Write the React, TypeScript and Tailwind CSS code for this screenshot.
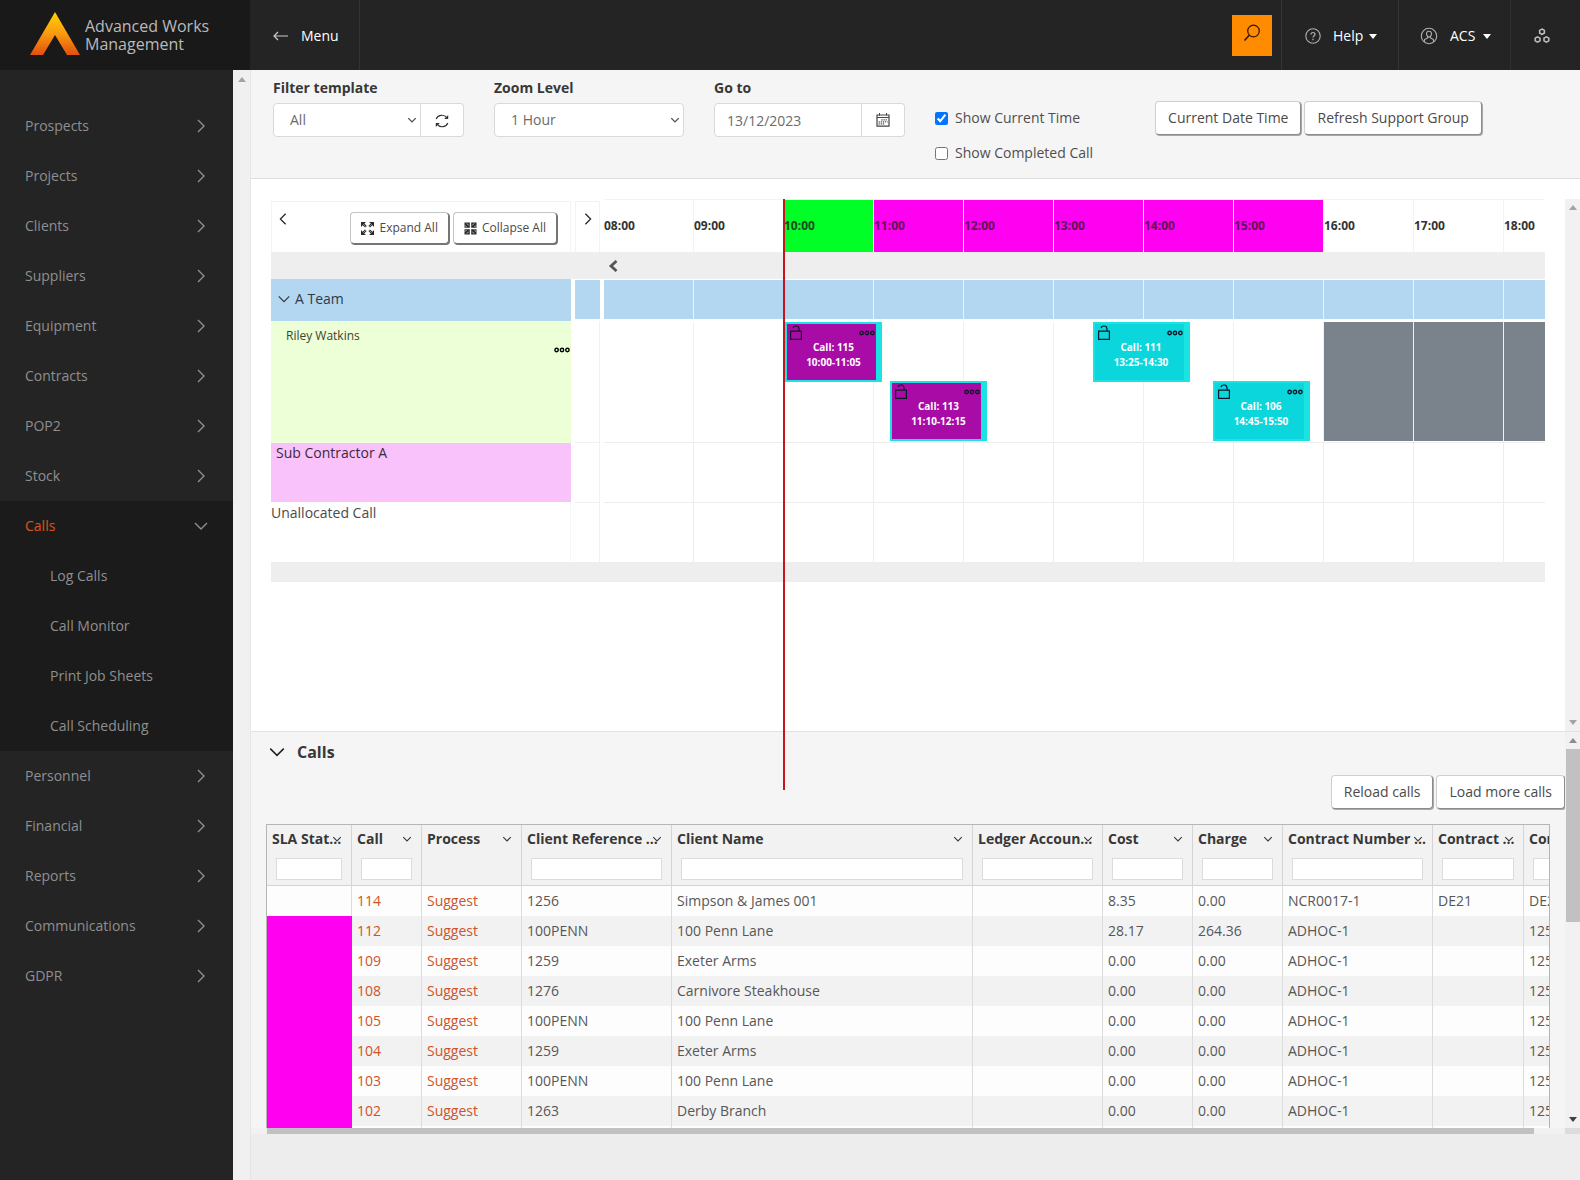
import React from 'react';

type NavItem = { label: string; children?: string[] };

const NAV: NavItem[] = [
  { label: 'Prospects' },
  { label: 'Projects' },
  { label: 'Clients' },
  { label: 'Suppliers' },
  { label: 'Equipment' },
  { label: 'Contracts' },
  { label: 'POP2' },
  { label: 'Stock' },
  { label: 'Calls', children: ['Log Calls', 'Call Monitor', 'Print Job Sheets', 'Call Scheduling'] },
  { label: 'Personnel' },
  { label: 'Financial' },
  { label: 'Reports' },
  { label: 'Communications' },
  { label: 'GDPR' },
];

const HOURS = [8, 9, 10, 11, 12, 13, 14, 15, 16, 17, 18];
const HOUR_WIDTH = 90;

type Booking = { id: number; start: string; end: string; lane: 0 | 1; allocated: boolean };

const BOOKINGS: Booking[] = [
  { id: 115, start: '10:00', end: '11:05', lane: 0, allocated: true },
  { id: 113, start: '11:10', end: '12:15', lane: 1, allocated: true },
  { id: 111, start: '13:25', end: '14:30', lane: 0, allocated: false },
  { id: 106, start: '14:45', end: '15:50', lane: 1, allocated: false },
];

const COLUMNS = [
  { title: 'SLA Stat...', width: 'w-[85px]', filter: true },
  { title: 'Call', width: 'w-[70px]', filter: true },
  { title: 'Process', width: 'w-[100px]', filter: false },
  { title: 'Client Reference ...', width: 'w-[150px]', filter: true },
  { title: 'Client Name', width: 'w-[301px]', filter: true },
  { title: 'Ledger Accoun...', width: 'w-[130px]', filter: true },
  { title: 'Cost', width: 'w-[90px]', filter: true },
  { title: 'Charge', width: 'w-[90px]', filter: true },
  { title: 'Contract Number ...', width: 'w-[150px]', filter: true },
  { title: 'Contract ...', width: 'w-[91px]', filter: true },
  { title: 'Contract', width: 'w-[150px]', filter: true },
];

const CALLS = [
  { call: '114', ref: '1256', client: 'Simpson & James 001', cost: '8.35', charge: '0.00', contract: 'NCR0017-1', code: 'DE21', name: 'DE21', late: false },
  { call: '112', ref: '100PENN', client: '100 Penn Lane', cost: '28.17', charge: '264.36', contract: 'ADHOC-1', code: '', name: '1256', late: true },
  { call: '109', ref: '1259', client: 'Exeter Arms', cost: '0.00', charge: '0.00', contract: 'ADHOC-1', code: '', name: '1256', late: true },
  { call: '108', ref: '1276', client: 'Carnivore Steakhouse', cost: '0.00', charge: '0.00', contract: 'ADHOC-1', code: '', name: '1256', late: true },
  { call: '105', ref: '100PENN', client: '100 Penn Lane', cost: '0.00', charge: '0.00', contract: 'ADHOC-1', code: '', name: '1256', late: true },
  { call: '104', ref: '1259', client: 'Exeter Arms', cost: '0.00', charge: '0.00', contract: 'ADHOC-1', code: '', name: '1256', late: true },
  { call: '103', ref: '100PENN', client: '100 Penn Lane', cost: '0.00', charge: '0.00', contract: 'ADHOC-1', code: '', name: '1256', late: true },
  { call: '102', ref: '1263', client: 'Derby Branch', cost: '0.00', charge: '0.00', contract: 'ADHOC-1', code: '', name: '1256', late: true },
];

const minutesFromStart = (time: string) => {
  const [h, m] = time.split(':').map(Number);
  return (h - HOURS[0]) * 60 + m;
};

/* ---------- icons ---------- */

const CHEVRONS = {
  left: 'M11 2 L5 8 L11 14',
  right: 'M5 2 L11 8 L5 14',
  down: 'M2 5 L8 11 L14 5',
};

const Chevron = ({ dir, className, weight = 1.4 }: { dir: keyof typeof CHEVRONS; className?: string; weight?: number }) => (
  <svg viewBox="0 0 16 16" className={className} fill="none" stroke="currentColor" strokeWidth={weight} aria-hidden="true">
    <path d={CHEVRONS[dir]} />
  </svg>
);

const ScrollArrow = ({ up, className = '' }: { up?: boolean; className?: string }) => (
  <svg viewBox="0 0 8 5" className={`h-[5px] w-2 ${className}`} fill="currentColor" aria-hidden="true">
    <path d={up ? 'M4 0 L8 5 H0 Z' : 'M0 0 H8 L4 5 Z'} />
  </svg>
);

const Logo = () => (
  <svg viewBox="0 0 50 43" className="mb-1 h-[43px] w-[50px]" aria-hidden="true">
    <defs>
      <linearGradient id="logo" x1="0" y1="0" x2="0" y2="1">
        <stop offset="0" stopColor="#ffd200" />
        <stop offset="0.5" stopColor="#fb9a10" />
        <stop offset="1" stopColor="#e2500f" />
      </linearGradient>
    </defs>
    <path d="M25 0 L50 43 H37 L25 23 L13 43 H0 Z" fill="url(#logo)" />
  </svg>
);

const ArrowLeft = () => (
  <svg viewBox="0 0 16 10" className="h-[10px] w-4 text-[#c9c9c9]" fill="none" stroke="currentColor" strokeWidth="1.2" aria-hidden="true">
    <path d="M1 5 H15 M5 1 L1 5 L5 9" />
  </svg>
);

const SearchIcon = () => (
  <svg viewBox="0 0 18 18" className="h-[18px] w-[18px]" fill="none" stroke="currentColor" strokeWidth="1.3" aria-hidden="true">
    <circle cx="10.5" cy="7" r="5.8" />
    <path d="M6.2 11.2 L1.5 16.5" strokeWidth="1.7" />
  </svg>
);

const HelpIcon = () => (
  <svg viewBox="0 0 16 16" className="h-4 w-4 text-[#b0b0b0]" fill="none" stroke="currentColor" aria-hidden="true">
    <circle cx="8" cy="8" r="7.2" strokeWidth="1.1" />
    <path d="M6 6.4 C6 3.9 10 3.9 10 6.3 C10 7.7 8 7.8 8 9.6" strokeWidth="1.2" />
    <path d="M8 10.8 V12.2" strokeWidth="1.3" />
  </svg>
);

const UserIcon = () => (
  <svg viewBox="0 0 18 18" className="h-[18px] w-[18px] text-[#b0b0b0]" fill="none" stroke="currentColor" strokeWidth="1.1" aria-hidden="true">
    <circle cx="9" cy="9" r="7.7" />
    <path d="M9 4.2 C6.8 4.2 6.3 5.8 6.6 7.4 C6.8 8.8 7.6 10 9 10 C10.4 10 11.2 8.8 11.4 7.4 C11.7 5.8 11.2 4.2 9 4.2 Z" />
    <path d="M7.6 9.8 V11 L4.5 12.6 V15 M10.4 9.8 V11 L13.5 12.6 V15" />
  </svg>
);

const ClusterIcon = () => (
  <svg viewBox="0 0 16 16" className="h-4 w-4 text-[#c0c0c0]" fill="none" stroke="currentColor" strokeWidth="1.5" aria-hidden="true">
    <path d="M8 1 L10.4 2.4 V5 L8 6.4 L5.6 5 V2.4 Z" />
    <path d="M3.6 8.8 L6 10.2 V12.8 L3.6 14.2 L1.2 12.8 V10.2 Z" />
    <path d="M12.4 8.8 L14.8 10.2 V12.8 L12.4 14.2 L10 12.8 V10.2 Z" />
  </svg>
);

const RefreshIcon = () => (
  <svg viewBox="0 0 14 14" className="mt-[2px] h-[14px] w-[14px] text-[#333]" fill="none" stroke="currentColor" strokeWidth="1.2" aria-hidden="true">
    <path d="M1.2 5 C2.6 1 8.6 -0.4 12 3.8" />
    <path d="M12.8 9 C11.4 13 5.4 14.4 2 10.2" />
    <path d="M13.2 1 V5 H9.2 Z M0.8 13 V9 H4.8 Z" fill="currentColor" stroke="none" />
  </svg>
);

const CalendarIcon = () => (
  <svg viewBox="0 0 14 14" className="h-[14px] w-[14px] text-[#444]" fill="none" stroke="currentColor" aria-hidden="true">
    <path d="M1 2 H13 V13.2 H1 Z M1 4.5 H13" strokeWidth="1.2" />
    <path d="M3.5 0 V2.6 M10.5 0 V2.6" />
    <path d="M5.4 6.8 H11.6 M2.6 8.8 H11.6 M2.6 10.8 H9" strokeWidth="1.2" strokeDasharray="1.2 0.9" />
  </svg>
);

const ExpandIcon = () => (
  <svg viewBox="0 0 13 13" className="h-[13px] w-[13px] text-[#2b2b2b]" fill="currentColor" aria-hidden="true">
    <path d="M0 0 H5 L3.4 1.6 L5.8 4 L4.2 5.6 L1.6 3.2 L0 5 Z" />
    <path d="M13 0 V5 L11.4 3.2 L9 5.6 L7.4 4 L9.8 1.6 L8 0 Z" />
    <path d="M0 13 V8 L1.6 9.8 L4 7.4 L5.6 9 L3.2 11.4 L5 13 Z" />
    <path d="M13 13 H8 L9.8 11.4 L7.4 9 L9 7.4 L11.4 9.8 L13 8 Z" />
    <path d="M2.2 2.2 L4.6 4.6 M10.8 2.2 L8.4 4.6 M2.2 10.8 L4.6 8.4 M10.8 10.8 L8.4 8.4" stroke="#fff" strokeWidth="0.5" />
  </svg>
);

const CollapseIcon = () => (
  <svg viewBox="0 0 13 13" className="h-[13px] w-[13px] text-[#2b2b2b]" aria-hidden="true">
    <path d="M0.5 0.5 H5.8 V5.8 H0.5 Z M7.2 0.5 H12.5 V5.8 H7.2 Z M0.5 7.2 H5.8 V12.5 H0.5 Z M7.2 7.2 H12.5 V12.5 H7.2 Z" fill="currentColor" />
    <path d="M1 3.4 L2.6 5 M2.8 1.4 L4.8 3.4 M12 3.4 L10.4 5 M10.2 1.4 L8.2 3.4 M1 9.6 L2.6 8 M2.8 11.6 L4.8 9.6 M12 9.6 L10.4 8 M10.2 11.6 L8.2 9.6" stroke="#fff" strokeWidth="0.7" />
  </svg>
);

const LockIcon = () => (
  <svg viewBox="0 0 12 15" className="h-[15px] w-3" fill="none" stroke="currentColor" strokeWidth="1.2" aria-hidden="true">
    <path d="M0.6 6.2 H11.4 V14.4 H0.6 Z" />
    <path d="M9 6 V4 C9 0.4 4 0 3 3" />
  </svg>
);

const MoreIcon = () => (
  <svg viewBox="0 0 16 6" className="h-[6px] w-4" fill="none" stroke="currentColor" strokeWidth="1.4" aria-hidden="true">
    <circle cx="2.6" cy="3" r="1.7" />
    <circle cx="8" cy="3" r="1.7" />
    <circle cx="13.4" cy="3" r="1.7" />
  </svg>
);

/* ---------- shared controls ---------- */

const RaisedButton = ({ children }: { children: React.ReactNode }) => (
  <button className="h-[34px] rounded border border-[#cfcfcf] border-r-[#8c8c8c] border-b-[#8c8c8c] bg-white px-3 text-sm whitespace-nowrap text-[#4a4a4a] shadow-[1px_1px_0_#a8a8a8]">
    {children}
  </button>
);

const ToolButton = ({ children }: { children: React.ReactNode }) => (
  <button className="flex h-8 items-center gap-[5px] rounded border border-[#c4c4c4] border-r-[#757575] border-b-[#757575] bg-white px-[10px] text-xs whitespace-nowrap text-[#4a4a4a] shadow-[1px_1px_0_#757575]">
    {children}
  </button>
);

/* ---------- page parts ---------- */

const Header = () => (
  <header className="flex h-[70px] shrink-0 bg-[#242424] text-sm font-medium text-white">
    <div className="flex w-[250px] shrink-0 items-center gap-[5px] bg-[#191919] pl-[30px]">
      <Logo />
      <span className="text-base leading-[18px] font-normal text-[#b9b9b9]">
        Advanced Works
        <br />
        Management
      </span>
    </div>
    <button className="flex w-[110px] items-center gap-3 border-r border-[#333] pt-[2px] pl-[23px]">
      <ArrowLeft />
      Menu
    </button>
    <div className="ml-auto flex">
      <div className="flex w-[50px] items-center border-r border-[#363636]">
        <button aria-label="Search" className="flex h-[41px] w-10 items-center justify-center bg-[#ff8c00] pb-1 text-[#3a1800]">
          <SearchIcon />
        </button>
      </div>
      <button className="flex w-[117px] items-center border-r border-[#363636] pt-[2px] pl-[23px]">
        <HelpIcon />
        <span className="ml-3">Help</span>
        <ScrollArrow className="ml-[6px]" />
      </button>
      <button className="flex w-[112px] items-center border-r border-[#2f2f2f] pt-[2px] pl-[21px]">
        <UserIcon />
        <span className="ml-3">ACS</span>
        <ScrollArrow className="ml-2" />
      </button>
      <button aria-label="Modules" className="flex w-[69px] items-center pt-[2px] pl-[23px]">
        <ClusterIcon />
      </button>
    </div>
  </header>
);

const Sidebar = () => (
  <nav className="w-[233px] shrink-0 bg-[#242424] pt-[31px] text-sm text-[#8f8f8f]">
    {NAV.map((item) => (
      <div key={item.label} className={item.children ? 'bg-[#1b1b1b]' : ''}>
        <a href="#" className="flex h-[50px] items-center justify-between pr-6 pb-px pl-[25px]">
          <span className={item.children ? 'text-[#e0521c]' : ''}>{item.label}</span>
          <Chevron dir={item.children ? 'down' : 'right'} className="h-4 w-4" />
        </a>
        {item.children?.map((child) => (
          <a key={child} href="#" className="flex h-[50px] items-center pb-px pl-[50px]">
            {child}
          </a>
        ))}
      </div>
    ))}
  </nav>
);

const fieldClass = 'h-[34px] border border-[#d9d9d9] bg-white text-sm text-[#6b6b6b]';

const Filters = () => (
  <section className="flex h-[109px] shrink-0 border-b border-[#dedede] bg-[#f5f5f5] pl-[22px] text-sm text-[#4f4f4f]">
    <div className="mr-[30px] pt-2">
      <label htmlFor="template" className="block h-[25px] font-bold text-[#383838]">
        Filter template
      </label>
      <div className="flex">
        <div className="relative">
          <select id="template" className={`${fieldClass} w-[148px] appearance-none rounded-l pl-4`}>
            <option>All</option>
          </select>
          <Chevron dir="down" weight={2.2} className="pointer-events-none absolute top-3 right-1 h-[10px] w-[10px]" />
        </div>
        <button aria-label="Reload templates" className={`${fieldClass} flex w-[43px] items-center justify-center rounded-r border-l-0`}>
          <RefreshIcon />
        </button>
      </div>
    </div>
    <div className="mr-[30px] pt-2">
      <label htmlFor="zoom" className="block h-[25px] font-bold text-[#383838]">
        Zoom Level
      </label>
      <div className="relative">
        <select id="zoom" className={`${fieldClass} w-[190px] appearance-none rounded pl-4`}>
          <option>1 Hour</option>
        </select>
        <Chevron dir="down" weight={2.2} className="pointer-events-none absolute top-3 right-1 h-[10px] w-[10px]" />
      </div>
    </div>
    <div className="mr-[30px] pt-2">
      <label htmlFor="goto" className="block h-[25px] font-bold text-[#383838]">
        Go to
      </label>
      <div className="flex">
        <input id="goto" type="text" defaultValue="13/12/2023" className={`${fieldClass} w-[148px] rounded-l pl-3`} />
        <button aria-label="Pick date" className={`${fieldClass} flex w-[43px] items-center justify-center rounded-r border-l-0`}>
          <CalendarIcon />
        </button>
      </div>
    </div>
    <div className="mr-[62px] flex flex-col gap-[15px] pt-[38px]">
      <label className="flex h-5 items-center gap-[7px]">
        <input type="checkbox" defaultChecked className="h-[13px] w-[13px]" />
        Show Current Time
      </label>
      <label className="flex h-5 items-center gap-[7px]">
        <input type="checkbox" className="h-[13px] w-[13px]" />
        Show Completed Call
      </label>
    </div>
    <div className="flex items-start gap-[3px] pt-[31px]">
      <RaisedButton>Current Date Time</RaisedButton>
      <RaisedButton>Refresh Support Group</RaisedButton>
    </div>
  </section>
);

const BookingCard = ({ booking }: { booking: Booking }) => (
  <div
    className={`absolute flex h-[60px] w-[97px] flex-col border-2 border-r-[6px] border-[#1be3e2] text-[#101828] ${
      booking.lane === 0 ? 'top-px' : 'top-[60px]'
    } ${booking.allocated ? 'bg-[#a90ba6]' : 'bg-[#0bd6dc]'}`}
    style={{ left: (minutesFromStart(booking.start) * HOUR_WIDTH) / 60 + 1 }}
  >
    <div className="flex h-4 items-center justify-between pt-px pr-px pl-[3px]">
      <LockIcon />
      <MoreIcon />
    </div>
    <div className="-mr-1 text-center text-[10px] leading-[15px] font-bold text-white">
      Call: {booking.id}
      <br />
      {booking.start}-{booking.end}
    </div>
  </div>
);

const rowClass = 'grid grid-cols-[300px_25px_minmax(0,1fr)] gap-x-1';

const HourCells = ({ className, offFrom = 24 }: { className: string; offFrom?: number }) => (
  <div className="flex h-full overflow-hidden">
    {HOURS.map((h) => (
      <div key={h} className={`w-[90px] shrink-0 border-r ${className} ${h >= offFrom ? 'bg-[#7a838b]' : ''}`} />
    ))}
  </div>
);

const hourColor = (h: number) => {
  if (h === 10) return 'bg-[#00ff26] text-[#1c4a1c]';
  if (h > 10 && h < 16) return 'bg-[#ff00f0] text-[#5c1457]';
  return 'text-[#333]';
};

const Schedule = () => (
  <section className="flex flex-1 bg-white text-sm text-[#4a4a4a]">
    <div className="min-w-0 flex-1 p-5">
      <div className="relative">
        <div className={`${rowClass} h-[53px]`}>
          <div className="mt-[2px] flex items-start justify-between border border-b-0 border-[#f3f3f3] pt-[10px] pr-[13px] pl-1">
            <button aria-label="Collapse panel" className="text-[#222]">
              <Chevron dir="left" className="h-[14px] w-[14px]" />
            </button>
            <div className="flex gap-1">
              <ToolButton>
                <ExpandIcon />
                Expand All
              </ToolButton>
              <ToolButton>
                <CollapseIcon />
                Collapse All
              </ToolButton>
            </div>
          </div>
          <div className="mt-[2px] flex items-start justify-center border border-b-0 border-[#f3f3f3] pt-[10px]">
            <button aria-label="Expand panel" className="text-[#222]">
              <Chevron dir="right" className="h-[14px] w-[14px]" />
            </button>
          </div>
          <div className="flex overflow-hidden border-t border-[#f3f3f3] text-xs font-bold">
            {HOURS.map((h) => (
              <div key={h} className={`flex w-[90px] shrink-0 items-center border-r border-[#f3f3f3] ${hourColor(h)}`}>
                {String(h).padStart(2, '0')}:00
              </div>
            ))}
          </div>
        </div>

        <div className="flex h-[27px] items-center bg-[#eee] pl-[337px]">
          <svg viewBox="0 0 10 12" className="h-3 w-[10px] text-[#555]" fill="none" stroke="currentColor" strokeWidth="2.8" aria-hidden="true">
            <path d="M8.5 1 L3 6 L8.5 11" />
          </svg>
        </div>

        <div className={`${rowClass} h-[42px]`}>
          <button className="flex items-center gap-1 bg-[#b4d7f1] pb-[2px] pl-[6px] text-[#2f3a44]">
            <Chevron dir="down" className="h-[14px] w-[14px]" />
            A Team
          </button>
          <div className="mt-px mb-[2px] bg-[#b4d7f1]" />
          <div className="pt-px pb-[2px]">
            <HourCells className="border-[#e9f3fb] bg-[#b4d7f1]" />
          </div>
        </div>

        <div className={`${rowClass} h-[122px]`}>
          <div className="flex justify-between bg-[#edffd6] pt-[5px] pl-[15px] text-xs leading-5 text-[#3c4434]">
            Riley Watkins
            <button aria-label="Engineer options" className="mt-5 self-start pt-px pr-px text-black">
              <MoreIcon />
            </button>
          </div>
          <div className="border-r border-b border-[#f1f1f1]" />
          <div className="relative border-b border-[#ededed] pt-px pb-px">
            <HourCells className="border-[#f0f0f0]" offFrom={16} />
            {BOOKINGS.map((b) => (
              <BookingCard key={b.id} booking={b} />
            ))}
          </div>
        </div>

        <div className={`${rowClass} h-[60px]`}>
          <div className="border-b border-white bg-[#f9c2fb] pl-[5px] text-[#3b2a3c]">Sub Contractor A</div>
          <div className="border-r border-b border-[#f1f1f1]" />
          <div className="border-b border-[#ededed]">
            <HourCells className="border-[#ededed]" />
          </div>
        </div>

        <div className={`${rowClass} h-[59px]`}>
          <div className="border-r border-[#f6f6f6]">Unallocated Call</div>
          <div className="border-r border-[#f1f1f1]" />
          <HourCells className="border-[#ededed]" />
        </div>

        <div className="h-5 bg-[#eee]" />

        {/* current time marker, runs down into the calls panel */}
        <div className="absolute top-0 left-[512px] z-10 h-[591px] w-[2px] bg-[#c4161c]" />
      </div>
    </div>
    <div className="mt-5 flex w-[15px] shrink-0 flex-col items-center justify-between bg-[#f1f1f1] py-[6px] text-[#a3a3a3]">
      <ScrollArrow up />
      <ScrollArrow />
    </div>
  </section>
);

const cellClass = 'overflow-hidden border-r border-[#dcdcdc] px-[5px] whitespace-nowrap';

const CallsTable = () => (
  <table className="w-[1407px] table-fixed border-separate border-spacing-0 text-sm text-[#575757]">
    <thead>
      <tr className="h-[61px] bg-[#f2f2f2]">
        {COLUMNS.map((col) => (
          <th key={col.title} className={`${col.width} relative overflow-hidden border-r border-b border-[#d4d4d4] p-0 text-left align-top font-bold whitespace-nowrap text-[#383838]`}>
            <div className="h-[33px] pt-1 pl-[5px]">{col.title}</div>
            <Chevron dir="down" weight={1.8} className="absolute top-[9px] right-[9px] h-[10px] w-[10px]" />
            {col.filter && (
              <div className="flex px-[9px]">
                <input type="text" aria-label={`Filter ${col.title}`} className="h-[22px] w-full min-w-0 border border-[#dcdcdc] bg-white px-1 text-xs font-normal" />
              </div>
            )}
          </th>
        ))}
      </tr>
    </thead>
    <tbody>
      {CALLS.map((row) => (
        <tr key={row.call} className="h-[30px] odd:bg-[#fdfdfd] even:bg-[#f2f2f2]">
          <td className={`${cellClass} ${row.late ? 'border-r-[#ff00f0] bg-[#ff00f0]' : ''}`} />
          <td className={cellClass}>
            <a href="#" className="text-[#cf5327]">{row.call}</a>
          </td>
          <td className={cellClass}>
            <a href="#" className="text-[#cf5327]">Suggest</a>
          </td>
          <td className={cellClass}>{row.ref}</td>
          <td className={cellClass}>{row.client}</td>
          <td className={cellClass} />
          <td className={cellClass}>{row.cost}</td>
          <td className={cellClass}>{row.charge}</td>
          <td className={cellClass}>{row.contract}</td>
          <td className={cellClass}>{row.code}</td>
          <td className={cellClass}>{row.name}</td>
        </tr>
      ))}
      <tr className="h-[30px] bg-[#fdfdfd]">
        {COLUMNS.map((col, i) => (
          <td key={col.title} className={`${cellClass} ${i === 0 ? 'border-r-[#ff00f0] bg-[#ff00f0]' : ''}`} />
        ))}
      </tr>
    </tbody>
  </table>
);

const CallsPanel = () => (
  <section className="flex border-t border-[#e2e2e2] bg-[#f5f5f5]">
    <div className="min-w-0 flex-1">
      <h2 className="flex h-[43px] items-center gap-[11px] pb-[3px] pl-[17px] text-base font-bold text-[#383838]">
        <Chevron dir="down" className="h-[18px] w-[18px] text-[#222]" />
        Calls
      </h2>
      <div className="flex justify-end gap-[3px]">
        <RaisedButton>Reload calls</RaisedButton>
        <RaisedButton>Load more calls</RaisedButton>
      </div>
      <div className="mt-[15px] mr-[15px] ml-[15px] h-[304px] overflow-hidden border border-b-0 border-[#b5b5b5]">
        <CallsTable />
      </div>
      <div className="flex h-[6px] bg-[#f1f1f1] pr-[31px] pl-4">
        <div className="flex-1 bg-[#c1c1c1]" />
      </div>
    </div>
    <div className="flex w-[15px] shrink-0 flex-col items-center bg-[#f1f1f1] pt-[6px] text-[#8c8c8c]">
      <ScrollArrow up />
      <div className="mt-[6px] ml-px h-[173px] w-[14px] bg-[#c1c1c1]" />
      <ScrollArrow className="mt-auto mb-[6px] text-[#404040]" />
      <div className="h-[6px] w-full bg-[#dcdcdc]" />
    </div>
  </section>
);

export default function App() {
  return (
    <div className="flex min-h-screen flex-col bg-[#ededed] font-['Open_Sans',sans-serif]">
      <Header />
      <div className="flex flex-1">
        <Sidebar />
        <div className="flex w-[17px] shrink-0 justify-center bg-[#f0f0f0] pt-[7px] text-[#a3a3a3]">
          <ScrollArrow up />
        </div>
        <main className="flex min-w-0 flex-1 flex-col border-l border-[#e6e6e6]">
          <Filters />
          <Schedule />
          <CallsPanel />
          <div className="h-[46px] shrink-0" />
        </main>
      </div>
    </div>
  );
}
